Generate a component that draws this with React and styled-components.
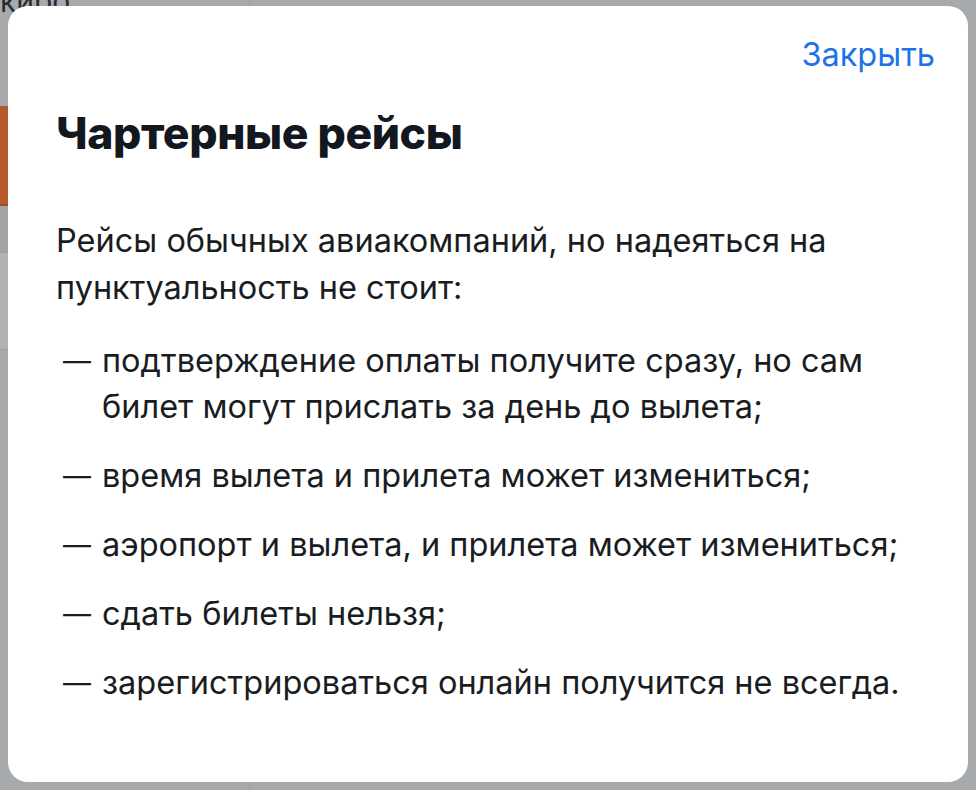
import React from 'react';
import styled, { createGlobalStyle } from 'styled-components';

const GlobalStyle = createGlobalStyle`
  html, body {
    margin: 0;
    padding: 0;
    height: 100%;
  }
  body {
    background: #a7aaad;
    font-family: Inter, "Noto Sans", sans-serif;
    overflow: hidden;
  }
`;

/* dimmed page behind the dialog */
const Page = styled.div`
  height: 790px;
  display: grid;
  grid-template-columns: 250px 1fr;
  background: #a7aaad;
`;

const Side = styled.div`
  display: flex;
  flex-direction: column;
  border-right: 1px solid #9c9fa2;
`;

const SideLabel = styled.div`
  height: 120px;
  margin-top: -14px;
  font-size: 30px;
  line-height: 30px;
  color: #2a2c2f;
`;

const OrangeBar = styled.div`
  height: 98px;
  background: #b65a2c;
  border-bottom: 2px solid #9e4e27;
`;

const Band = styled.div`
  height: ${p => p.h}px;
  background: ${p => p.bg};
  border-bottom: 1px solid #9a9da0;
`;

const Main = styled.div``;

const Overlay = styled.div`
  position: fixed;
  inset: 0;
  display: flex;
  justify-content: center;
  align-items: flex-start;
  padding-top: 6px;
`;

const Dialog = styled.div`
  width: 960px;
  height: 776px;
  box-sizing: border-box;
  background: #ffffff;
  border-radius: 20px;
  padding: 30px 48px 48px 48px;
  display: flex;
  flex-direction: column;
`;

const Header = styled.div`
  display: flex;
  justify-content: flex-end;
  margin-right: -15px;
`;

const CloseButton = styled.button`
  border: 0;
  background: none;
  padding: 0;
  font-family: inherit;
  font-size: 32.5px;
  line-height: 38px;
  color: #1c73e8;
  cursor: pointer;
`;

const Title = styled.h2`
  margin: 35px 0 0;
  font-size: 44.5px;
  line-height: 48px;
  font-weight: 800;
  color: #131820;
  letter-spacing: -0.4px;
`;

const Text = styled.p`
  margin: 60px 0 0;
  font-size: 32.5px;
  line-height: 47px;
  color: #191d22;
`;

const List = styled.ul`
  list-style: none;
  margin: 27px 0 0;
  padding: 0;
  display: flex;
  flex-direction: column;
  gap: 23px;
`;

const Item = styled.li`
  display: grid;
  grid-template-columns: 46px 1fr;
  font-size: 32.5px;
  line-height: 46px;
  color: #191d22;
`;

const Dash = styled.span`
  padding-left: 7px;
  font-size: 28px;
`;

const items = [
  'подтверждение оплаты получите сразу, но сам билет могут прислать за день до вылета;',
  'время вылета и прилета может измениться;',
  'аэропорт и вылета, и прилета может измениться;',
  'сдать билеты нельзя;',
  'зарегистрироваться онлайн получится не всегда.',
];

export default function App() {
  return (
    <>
      <GlobalStyle />
      <Page>
        <Side>
          <SideLabel>киро</SideLabel>
          <OrangeBar />
          <Band h={46} bg="#a1a3a5" />
          <Band h={96} bg="#b0b3b6" />
        </Side>
        <Main />
      </Page>
      <Overlay>
        <Dialog role="dialog">
          <Header>
            <CloseButton>Закрыть</CloseButton>
          </Header>
          <Title>Чартерные рейсы</Title>
          <Text>
            Рейсы обычных авиакомпаний, но надеяться на пунктуальность не стоит:
          </Text>
          <List>
            {items.map(text => (
              <Item key={text}>
                <Dash>—</Dash>
                <span>{text}</span>
              </Item>
            ))}
          </List>
        </Dialog>
      </Overlay>
    </>
  );
}
